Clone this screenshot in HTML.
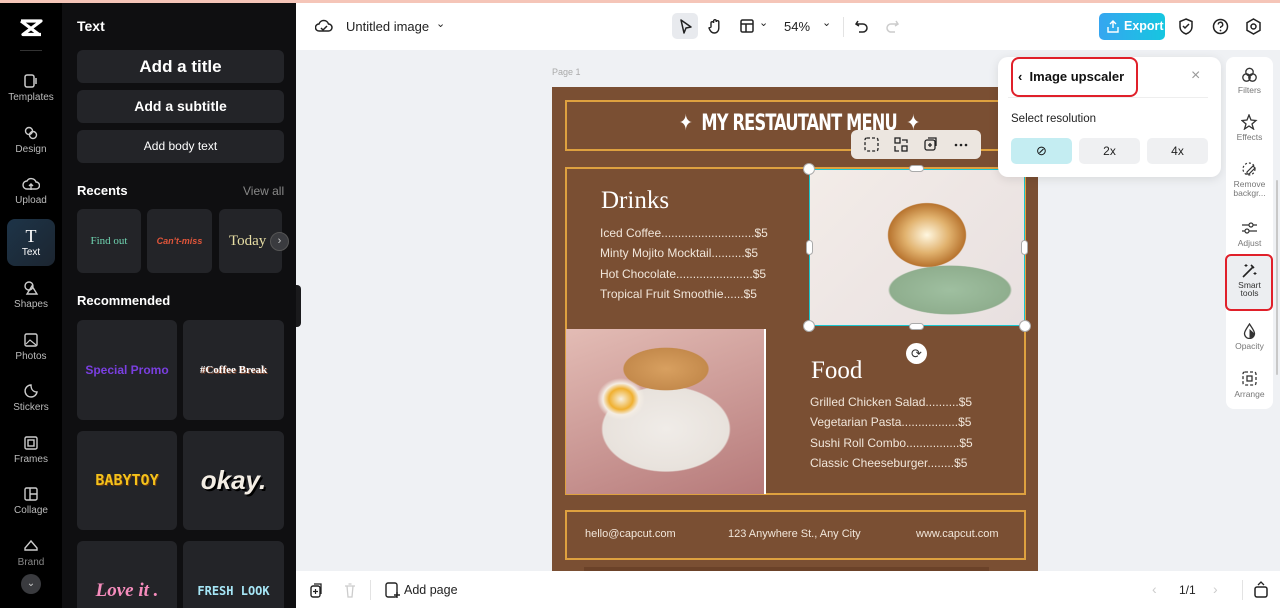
<!DOCTYPE html>
<html><head><meta charset="utf-8"><style>
*{box-sizing:border-box;margin:0;padding:0}
html,body{width:1280px;height:608px;overflow:hidden}
body{font-family:"Liberation Sans",sans-serif;background:#eff1f4;position:relative}
.abs{position:absolute}
.rail{left:0;top:3px;width:62px;height:605px;background:#000}
.ri{position:absolute;left:0;width:62px;text-align:center;color:#bbb;font-size:10px}
.ri svg{display:block;margin:0 auto 3px}
.panel{left:62px;top:3px;width:234px;height:605px;background:#0f0f11;color:#fff;overflow:hidden}
.btn{position:absolute;left:15px;width:207px;height:33px;background:#232428;border-radius:6px;text-align:center;font-weight:bold;color:#fff}
.card{position:absolute;background:#232428;border-radius:6px;text-align:center}
.top{left:296px;top:3px;width:984px;height:47px;background:#fff}
.bot{left:296px;top:571px;width:984px;height:37px;background:#fff}
.page{left:552px;top:87px;width:486px;height:484px;background:#7a4f33}
.ob{position:absolute;border:2px solid #dea13f}
.mt{color:#f1e6da;font-size:12px;line-height:20.3px}
</style></head><body>
<div class="abs" style="left:0;top:0;width:1280px;height:3px;background:#f5c5b8"></div>
<div class="abs rail">
 <svg class="abs" style="left:19px;top:15px" width="24" height="20" viewBox="0 0 24 20"><path d="M2 3h20L4 16.5h18M2 3l18 13.5" stroke="#fff" stroke-width="3.2" fill="none" stroke-linejoin="round"/></svg>
 <div class="abs" style="left:20px;top:47px;width:22px;height:1px;background:#333"></div>
 <div class="ri" style="top:70px"><svg width="16" height="16"><rect x="2" y="2" width="9" height="12" rx="2" fill="none" stroke="#ccc" stroke-width="1.5"/><path d="M13 5v6" stroke="#ccc" stroke-width="1.5"/></svg>Templates</div>
 <div class="ri" style="top:122px"><svg width="16" height="16"><circle cx="6" cy="6" r="3.5" fill="none" stroke="#ccc" stroke-width="1.4"/><circle cx="10" cy="10" r="3.5" fill="none" stroke="#ccc" stroke-width="1.4"/></svg>Design</div>
 <div class="ri" style="top:173px"><svg width="18" height="16"><path d="M5 13a4 4 0 0 1 0-8 5 5 0 0 1 9 1 3.5 3.5 0 0 1 0 7zM9 14V8M7 10l2-2 2 2" fill="none" stroke="#ccc" stroke-width="1.4"/></svg>Upload</div>
 <div class="abs" style="left:7px;top:216px;width:48px;height:47px;border-radius:8px;background:linear-gradient(135deg,#1d3448,#1c2530)"></div>
 <div class="ri" style="top:225px;color:#fff"><div style="font-size:18px;font-family:'Liberation Serif',serif;line-height:16px;margin-bottom:3px">T</div>Text</div>
 <div class="ri" style="top:277px"><svg width="16" height="16"><circle cx="6" cy="6" r="4" fill="none" stroke="#ccc" stroke-width="1.4"/><path d="M9 6l5 8H4z" fill="none" stroke="#ccc" stroke-width="1.4"/></svg>Shapes</div>
 <div class="ri" style="top:329px"><svg width="16" height="16"><rect x="2" y="2" width="12" height="12" rx="1.5" fill="none" stroke="#ccc" stroke-width="1.4"/><path d="M3 12l4-4 6 5" fill="none" stroke="#ccc" stroke-width="1.2"/></svg>Photos</div>
 <div class="ri" style="top:380px"><svg width="16" height="16"><path d="M14 9A6 6 0 1 1 8 2c0 4 2 7 6 7z" fill="none" stroke="#ccc" stroke-width="1.4"/></svg>Stickers</div>
 <div class="ri" style="top:432px"><svg width="16" height="16"><rect x="2" y="2" width="12" height="12" rx="1.5" fill="none" stroke="#ccc" stroke-width="1.4"/><rect x="5" y="5" width="6" height="6" fill="none" stroke="#ccc" stroke-width="1.4"/></svg>Frames</div>
 <div class="ri" style="top:483px"><svg width="16" height="16"><rect x="2" y="2" width="12" height="12" rx="1.5" fill="none" stroke="#ccc" stroke-width="1.4"/><path d="M7 2v12M7 8h7" stroke="#ccc" stroke-width="1.4"/></svg>Collage</div>
 <div class="ri" style="top:535px;color:#888"><svg width="16" height="16"><path d="M2 12h12v-2L8 3 2 10z" fill="none" stroke="#ccc" stroke-width="1.4"/></svg>Brand</div>
 <div class="abs" style="left:21px;top:571px;width:20px;height:20px;border-radius:50%;background:#3a3b3f;color:#ccc;font-size:10px;text-align:center;line-height:20px">⌄</div>
</div>
<div class="abs panel">
 <div class="abs" style="left:15px;top:15px;font-size:14px;font-weight:bold">Text</div>
 <div class="btn" style="top:47px;font-size:17px;line-height:33px">Add a title</div>
 <div class="btn" style="top:87px;font-size:14px;line-height:33px">Add a subtitle</div>
 <div class="btn" style="top:127px;font-size:12px;line-height:33px;font-weight:normal">Add body text</div>
 <div class="abs" style="left:15px;top:180px;font-size:13px;font-weight:bold">Recents</div>
 <div class="abs" style="left:181px;top:181px;font-size:12px;color:#888">View all</div>
 <div class="card" style="left:15px;top:206px;width:64px;height:64px;line-height:64px;color:#6fd3b0;font-size:11px;font-family:'Liberation Serif',serif">Find out</div>
 <div class="card" style="left:85px;top:206px;width:65px;height:64px;line-height:64px;color:#e0553a;font-size:9px;font-style:italic;font-weight:bold">Can't-miss</div>
 <div class="card" style="left:157px;top:206px;width:63px;height:64px;line-height:64px;color:#e8dfa5;font-size:15px;font-family:'Liberation Serif',serif;overflow:hidden;text-align:left;padding-left:10px">Today</div>
 <div class="abs" style="left:208px;top:229px;width:19px;height:19px;border-radius:50%;background:#3a3b3f;border:1px solid #555;color:#ccc;font-size:11px;text-align:center;line-height:17px">›</div>
 <div class="abs" style="left:15px;top:290px;font-size:13px;font-weight:bold">Recommended</div>
 <div class="card" style="left:15px;top:317px;width:100px;height:100px;line-height:100px;color:#7a3fe0;font-size:12px;font-weight:bold">Special Promo</div>
 <div class="card" style="left:121px;top:317px;width:101px;height:100px;line-height:100px;color:#fff;font-size:11px;font-weight:bold;font-family:'Liberation Serif',serif;text-shadow:1px 1px 0 #8a4a30">#Coffee Break</div>
 <div class="card" style="left:15px;top:428px;width:100px;height:99px;line-height:99px;color:#f4c21b;font-size:15px;font-weight:bold;font-family:'DejaVu Sans Mono',monospace;text-shadow:1px 1px 0 #6b3a10">BABYTOY</div>
 <div class="card" style="left:121px;top:428px;width:101px;height:99px;line-height:99px;color:#f3ede4;font-size:26px;font-weight:bold;font-style:italic;text-shadow:2px 2px 0 #000">okay.</div>
 <div class="card" style="left:15px;top:538px;width:100px;height:100px;line-height:100px;color:#f58cbc;font-size:19px;font-weight:bold;font-style:italic;font-family:'Liberation Serif',serif">Love it .</div>
 <div class="card" style="left:121px;top:538px;width:101px;height:100px;line-height:100px;color:#a6e6f6;font-size:12px;font-weight:bold;font-family:'DejaVu Sans Mono',monospace">FRESH LOOK</div>
</div>
<div class="abs" style="left:296px;top:285px;width:5px;height:42px;background:#1a1a1c;border-radius:0 4px 4px 0"></div>
<div class="abs top">
 <svg class="abs" style="left:19px;top:15px" width="18" height="16"><path d="M4 13a3.5 3.5 0 0 1 0-7 5 5 0 0 1 9.5 0 3.5 3.5 0 0 1 0 7z" fill="none" stroke="#222" stroke-width="1.5"/><path d="M6 10l2 2 4-4" fill="none" stroke="#222" stroke-width="1.5"/></svg>
 <div class="abs" style="left:50px;top:16px;font-size:13px;color:#222">Untitled image</div>
 <div class="abs" style="left:140px;top:14px;font-size:11px;color:#222">⌄</div>
 <div class="abs" style="left:376px;top:10px;width:26px;height:26px;background:#e8eaee;border-radius:5px"></div>
 <svg class="abs" style="left:383px;top:16px" width="14" height="16"><path d="M2 1l10 7-5 1-2 5z" fill="none" stroke="#222" stroke-width="1.5" stroke-linejoin="round"/></svg>
 <svg class="abs" style="left:411px;top:15px" width="16" height="17"><path d="M4 9V5a1.3 1.3 0 0 1 2.6 0V3a1.3 1.3 0 0 1 2.6 0v1a1.3 1.3 0 0 1 2.6 0v6c0 3-2 5-4.5 5S3 13 2 10z" fill="none" stroke="#222" stroke-width="1.4"/></svg>
 <svg class="abs" style="left:443px;top:15px" width="16" height="16"><rect x="2" y="2" width="12" height="12" rx="1.5" fill="none" stroke="#222" stroke-width="1.5"/><path d="M2 6h12M7 6v8" stroke="#222" stroke-width="1.5"/></svg>
 <div class="abs" style="left:463px;top:13px;font-size:11px;color:#222">⌄</div>
 <div class="abs" style="left:488px;top:16px;font-size:13px;color:#222">54%</div>
 <div class="abs" style="left:526px;top:13px;font-size:11px;color:#222">⌄</div>
 <div class="abs" style="left:547px;top:14px;width:1px;height:20px;background:#e3e3e3"></div>
 <svg class="abs" style="left:558px;top:15px" width="16" height="16"><path d="M4 3L2 6l3 2M2 6h7a4 4 0 0 1 0 8H5" fill="none" stroke="#222" stroke-width="1.5"/></svg>
 <svg class="abs" style="left:588px;top:15px" width="16" height="16"><path d="M12 3l2 3-3 2M14 6H7a4 4 0 0 0 0 8h4" fill="none" stroke="#ccc" stroke-width="1.5"/></svg>
 <div class="abs" style="left:803px;top:10px;width:66px;height:27px;border-radius:5px;background:linear-gradient(90deg,#36a6f0,#16c6e0);color:#fff;font-weight:bold;font-size:12.5px;line-height:27px;padding-left:25px">Export</div>
 <svg class="abs" style="left:811px;top:17px" width="12" height="13"><path d="M6 1v7M3 4l3-3 3 3M1 7v5h10V7" fill="none" stroke="#fff" stroke-width="1.4"/></svg>
 <svg class="abs" style="left:882px;top:15px" width="16" height="18"><path d="M8 1l6 2.5v5c0 4-3 6.5-6 7.5-3-1-6-3.5-6-7.5v-5z" fill="none" stroke="#222" stroke-width="1.5"/><path d="M5 8l2 2 4-4" fill="none" stroke="#222" stroke-width="1.5"/></svg>
 <svg class="abs" style="left:916px;top:15px" width="17" height="17"><circle cx="8.5" cy="8.5" r="7" fill="none" stroke="#222" stroke-width="1.5"/><path d="M6.3 6.5a2.2 2.2 0 1 1 3 2c-.7.3-.8.8-.8 1.5" fill="none" stroke="#222" stroke-width="1.4"/><circle cx="8.5" cy="12.5" r=".9" fill="#222"/></svg>
 <svg class="abs" style="left:949px;top:15px" width="17" height="17"><path d="M8.5 1l6.5 3.7v7.6L8.5 16 2 12.3V4.7z" fill="none" stroke="#222" stroke-width="1.5"/><circle cx="8.5" cy="8.5" r="2.5" fill="none" stroke="#222" stroke-width="1.5"/></svg>
</div>
<div class="abs" style="left:552px;top:67px;font-size:9px;color:#aaa">Page 1</div>
<div class="abs page">
 <div class="ob" style="left:13px;top:13px;width:461px;height:51px"></div>
 <div class="abs" style="left:0;top:24px;width:440px;text-align:center;color:#fff;font-weight:bold;font-size:22px;letter-spacing:-1px;transform:scaleX(.82);transform-origin:243px 0;font-family:'DejaVu Sans Condensed','Liberation Sans Narrow',sans-serif;margin-left:23px">✦ &nbsp;MY RESTAUTANT MENU &nbsp;✦</div>
 <div class="ob" style="left:13px;top:80px;width:461px;height:328px"></div>
 <div class="abs" style="left:49px;top:100px;font-family:'Liberation Serif',serif;color:#fff;font-size:25px">Drinks</div>
 <div class="abs mt" style="left:48px;top:136px">Iced Coffee............................$5<br>Minty Mojito Mocktail..........$5<br>Hot Chocolate.......................$5<br>Tropical Fruit Smoothie......$5</div>
 <div class="abs" style="left:14px;top:242px;width:198px;height:165px;background:radial-gradient(ellipse 40px 35px at 55px 70px,#f7f0e0 0%,#f0b030 30%,#f4ede4 45%,transparent 60%),radial-gradient(ellipse 60px 30px at 100px 40px,#d8a060 0%,#c48a4c 70%,transparent 72%),radial-gradient(ellipse 90px 60px at 100px 100px,#f0ece8 0%,#e8e2dc 70%,transparent 72%),linear-gradient(160deg,#e3bcb5,#b67a7a)"></div>
 <div class="abs" style="left:212px;top:242px;width:2px;height:165px;background:#fff"></div>
 <div class="abs" style="left:259px;top:270px;font-family:'Liberation Serif',serif;color:#fff;font-size:25px">Food</div>
 <div class="abs mt" style="left:258px;top:305px">Grilled Chicken Salad..........$5<br>Vegetarian Pasta.................$5<br>Sushi Roll Combo................$5<br>Classic Cheeseburger........$5</div>
 <div class="ob" style="left:13px;top:423px;width:461px;height:50px"></div>
 <div class="abs" style="left:33px;top:441px;font-size:11px;color:#f1e6da">hello@capcut.com</div>
 <div class="abs" style="left:176px;top:441px;font-size:11px;color:#f1e6da">123 Anywhere St., Any City</div>
 <div class="abs" style="left:364px;top:441px;font-size:11px;color:#f1e6da">www.capcut.com</div>
 <div class="abs" style="left:32px;top:480px;width:405px;height:4px;background:#6b4229"></div>
</div>
<div class="abs" style="left:809px;top:169px;width:216px;height:157px;border:1.5px solid #19c6d0;background:radial-gradient(ellipse 55px 45px at 117px 65px,#fff7e0 0%,#e1b26e 40%,#b8742f 70%,transparent 72%),radial-gradient(ellipse 100px 40px at 140px 120px,#9fbfa0 0%,#8fae8e 60%,transparent 62%),linear-gradient(135deg,#f3ece8,#e8e0e0)"></div>
<div class="abs" style="left:803px;top:163px;width:12px;height:12px;border-radius:50%;background:#fff;border:1px solid #aaa"></div>
<div class="abs" style="left:803px;top:320px;width:12px;height:12px;border-radius:50%;background:#fff;border:1px solid #aaa"></div>
<div class="abs" style="left:1019px;top:320px;width:12px;height:12px;border-radius:50%;background:#fff;border:1px solid #aaa"></div>
<div class="abs" style="left:909px;top:165px;width:15px;height:7px;border-radius:4px;background:#fff;border:1px solid #aaa"></div>
<div class="abs" style="left:909px;top:323px;width:15px;height:7px;border-radius:4px;background:#fff;border:1px solid #aaa"></div>
<div class="abs" style="left:806px;top:240px;width:7px;height:15px;border-radius:4px;background:#fff;border:1px solid #aaa"></div>
<div class="abs" style="left:1021px;top:240px;width:7px;height:15px;border-radius:4px;background:#fff;border:1px solid #aaa"></div>
<div class="abs" style="left:906px;top:343px;width:21px;height:21px;border-radius:50%;background:#fff;color:#333;font-size:13px;text-align:center;line-height:21px">⟳</div>
<div class="abs" style="left:851px;top:130px;width:130px;height:29px;background:#ece6e0;border-radius:6px"></div>
<svg class="abs" style="left:864px;top:137px" width="110" height="16"><rect x="1" y="1" width="13" height="13" rx="2" fill="none" stroke="#222" stroke-width="1.3" stroke-dasharray="3 2"/><rect x="31" y="1" width="5" height="5" fill="none" stroke="#222" stroke-width="1.3"/><rect x="38" y="9" width="5" height="5" fill="none" stroke="#222" stroke-width="1.3"/><path d="M38 3h5v3M31 9v5h4" fill="none" stroke="#222" stroke-width="1.3"/><rect x="61" y="3" width="10" height="10" rx="2" fill="none" stroke="#222" stroke-width="1.3"/><path d="M64 1h8v8M66 6v4M64 8h4" fill="none" stroke="#222" stroke-width="1.3"/><circle cx="92" cy="8" r="1.3" fill="#222"/><circle cx="97" cy="8" r="1.3" fill="#222"/><circle cx="102" cy="8" r="1.3" fill="#222"/></svg>
<div class="abs" style="left:998px;top:57px;width:223px;height:120px;background:#fff;border-radius:10px;box-shadow:0 2px 10px rgba(0,0,0,.1)">
 <div class="abs" style="left:13px;top:0;width:127px;height:40px;border:2px solid #e0202a;border-radius:8px"></div>
 <div class="abs" style="left:20px;top:12px;font-size:13px;font-weight:bold;color:#111">‹&nbsp; Image upscaler</div>
 <div class="abs" style="left:193px;top:10px;font-size:16px;color:#999">×</div>
 <div class="abs" style="left:10px;top:40px;width:200px;height:1px;background:#eee"></div>
 <div class="abs" style="left:13px;top:56px;font-size:11.5px;color:#222">Select resolution</div>
 <div class="abs" style="left:13px;top:81px;width:61px;height:26px;border-radius:5px;background:#c4edf2;text-align:center;line-height:26px;font-size:13px;color:#111">⊘</div>
 <div class="abs" style="left:81px;top:81px;width:61px;height:26px;border-radius:5px;background:#eff0f2;text-align:center;line-height:26px;font-size:12px;color:#222">2x</div>
 <div class="abs" style="left:149px;top:81px;width:61px;height:26px;border-radius:5px;background:#eff0f2;text-align:center;line-height:26px;font-size:12px;color:#222">4x</div>
</div>
<div class="abs" style="left:1226px;top:57px;width:47px;height:352px;background:#fff;border-radius:8px;font-size:8.5px;color:#777;text-align:center">
 <div class="abs" style="left:0;top:10px;width:47px"><svg width="17" height="16" style="display:block;margin:0 auto 2px"><circle cx="8.5" cy="5" r="3.7" fill="none" stroke="#333" stroke-width="1.3"/><circle cx="5.5" cy="10.5" r="3.7" fill="none" stroke="#333" stroke-width="1.3"/><circle cx="11.5" cy="10.5" r="3.7" fill="none" stroke="#333" stroke-width="1.3"/></svg>Filters</div>
 <div class="abs" style="left:0;top:57px;width:47px"><svg width="17" height="16" style="display:block;margin:0 auto 2px"><path d="M8 1l2 5 5 .5-4 3.5 1.5 5L8 12l-4.5 3L5 10 1 6.5 6 6z" fill="none" stroke="#333" stroke-width="1.3"/></svg>Effects</div>
 <div class="abs" style="left:0;top:104px;width:47px;line-height:9px"><svg width="17" height="16" style="display:block;margin:0 auto 3px"><circle cx="8" cy="8" r="6" fill="none" stroke="#333" stroke-width="1.2" stroke-dasharray="2 2"/><path d="M6 11l6-6 2 2-6 6H6z" fill="#fff" stroke="#333" stroke-width="1.2"/></svg>Remove<br>backgr...</div>
 <div class="abs" style="left:0;top:163px;width:47px"><svg width="17" height="16" style="display:block;margin:0 auto 2px"><path d="M1 5h15M1 11h15" stroke="#333" stroke-width="1.2"/><circle cx="10" cy="5" r="2" fill="#fff" stroke="#333" stroke-width="1.2"/><circle cx="6" cy="11" r="2" fill="#fff" stroke="#333" stroke-width="1.2"/></svg>Adjust</div>
 <div class="abs" style="left:-1px;top:197px;width:48px;height:57px;border:2px solid #e0202a;border-radius:6px;background:#eceef1"></div>
 <div class="abs" style="left:0;top:205px;width:47px;line-height:8px;color:#333"><svg width="17" height="16" style="display:block;margin:0 auto 3px"><path d="M2 15L12 5M10 3l3 3" stroke="#222" stroke-width="1.6"/><path d="M5 2v3M3.5 3.5h3M14 10v3M12.5 11.5h3" stroke="#222" stroke-width="1"/></svg>Smart<br>tools</div>
 <div class="abs" style="left:0;top:266px;width:47px"><svg width="17" height="16" style="display:block;margin:0 auto 2px"><path d="M8.5 1C6 5 3.5 8 3.5 10.5a5 5 0 0 0 10 0C13.5 8 11 5 8.5 1z" fill="none" stroke="#333" stroke-width="1.3"/><path d="M8.5 6v9a5 5 0 0 0 5-4.5z" fill="#333"/></svg>Opacity</div>
 <div class="abs" style="left:0;top:314px;width:47px"><svg width="17" height="16" style="display:block;margin:0 auto 2px"><rect x="2" y="1" width="13" height="13" rx="2" fill="none" stroke="#333" stroke-width="1.3" stroke-dasharray="3 2"/><rect x="6" y="5" width="5" height="5" fill="none" stroke="#333" stroke-width="1.3"/></svg>Arrange</div>
</div>
<div class="abs" style="left:1276px;top:180px;width:2px;height:195px;background:#c8c8c8;border-radius:1px"></div>
<div class="abs bot">
 <svg class="abs" style="left:14px;top:12px" width="14" height="15"><rect x="1" y="3" width="9" height="11" rx="2" fill="none" stroke="#222" stroke-width="1.4"/><path d="M4 1h7v10" fill="none" stroke="#222" stroke-width="1.3"/><path d="M5.5 6v5M3 8.5h5" stroke="#222" stroke-width="1.2"/></svg>
 <svg class="abs" style="left:48px;top:12px" width="12" height="15"><path d="M1 3h10M3 3l1 11h4l1-11M4.5 1h3" fill="none" stroke="#ccc" stroke-width="1.3"/></svg>
 <div class="abs" style="left:74px;top:9px;width:1px;height:20px;background:#e3e3e3"></div>
 <svg class="abs" style="left:89px;top:11px" width="15" height="17"><rect x="1" y="1" width="11" height="14" rx="2" fill="none" stroke="#222" stroke-width="1.4"/><path d="M12 10v6M9 13h6" stroke="#222" stroke-width="1.4"/></svg>
 <div class="abs" style="left:108px;top:12px;font-size:12.5px;color:#222">Add page</div>
 <div class="abs" style="left:856px;top:10px;font-size:14px;color:#ccc">‹</div>
 <div class="abs" style="left:883px;top:12px;font-size:12px;color:#222">1/1</div>
 <div class="abs" style="left:917px;top:10px;font-size:14px;color:#ccc">›</div>
 <div class="abs" style="left:946px;top:9px;width:1px;height:20px;background:#e3e3e3"></div>
 <svg class="abs" style="left:958px;top:10px" width="14" height="17"><rect x="1" y="6" width="12" height="10" rx="2" fill="none" stroke="#222" stroke-width="1.5"/><path d="M4 4l3-3 3 3" fill="none" stroke="#222" stroke-width="1.3"/></svg>
</div>
</body></html>
